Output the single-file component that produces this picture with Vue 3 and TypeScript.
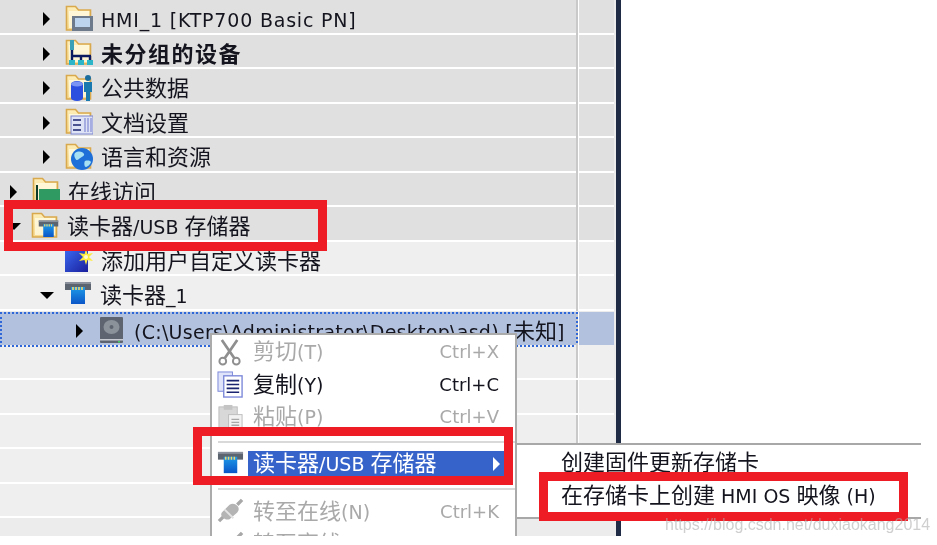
<script setup lang="ts">
interface Row { indent: number; arrow: '' | 'right' | 'down'; icon: string; text: string; tone: 'dark' | 'light' | 'sel'; track?: 'bold' | 'wide' | 'path' }
const rows: Row[] = [
  { indent: 43, arrow: 'right', icon: 'f-hmi', text: 'HMI_1 [KTP700 Basic PN]', tone: 'dark', track: 'wide' },
  { indent: 43, arrow: 'right', icon: 'f-net', text: '未分组的设备', tone: 'dark', track: 'bold' },
  { indent: 43, arrow: 'right', icon: 'f-data', text: '公共数据', tone: 'dark' },
  { indent: 43, arrow: 'right', icon: 'f-doc', text: '文档设置', tone: 'dark' },
  { indent: 43, arrow: 'right', icon: 'f-globe', text: '语言和资源', tone: 'dark' },
  { indent: 10, arrow: 'right', icon: 'f-online', text: '在线访问', tone: 'dark' },
  { indent: 10, arrow: 'down', icon: 'f-reader', text: '读卡器/USB 存储器', tone: 'dark' },
  { indent: 43, arrow: '', icon: 'add', text: '添加用户自定义读卡器', tone: 'light' },
  { indent: 43, arrow: 'down', icon: 'reader', text: '读卡器_1', tone: 'light' },
  { indent: 76, arrow: 'right', icon: 'disk', text: '(C:\\Users\\Administrator\\Desktop\\asd) [未知]', tone: 'sel', track: 'path' },
  { indent: 0, arrow: '', icon: '', text: '', tone: 'light' },
  { indent: 0, arrow: '', icon: '', text: '', tone: 'light' },
  { indent: 0, arrow: '', icon: '', text: '', tone: 'light' },
  { indent: 0, arrow: '', icon: '', text: '', tone: 'light' },
  { indent: 0, arrow: '', icon: '', text: '', tone: 'light' },
]
function segs(text: string): { t: string; cjk: boolean }[] {
  return (text.match(/[\u4e00-\u9fff]+|[^\u4e00-\u9fff]+/g) ?? []).map((t) => ({ t, cjk: /[\u4e00-\u9fff]/.test(t) }))
}
</script>

<template>
  <div class="screen">
    <svg class="defs" width="0" height="0">
      <defs>
        <linearGradient id="fold" x1="0" y1="0" x2="0" y2="1"><stop offset="0" stop-color="#fdeeb8"/><stop offset="1" stop-color="#f6d98e"/></linearGradient>
        <linearGradient id="card" x1="0" y1="0" x2="0" y2="1"><stop offset="0" stop-color="#1e9be8"/><stop offset="1" stop-color="#0a55c8"/></linearGradient>
        <linearGradient id="addg" x1="0" y1="0" x2="1" y2="1"><stop offset="0" stop-color="#3a68f0"/><stop offset="1" stop-color="#1a1f9c"/></linearGradient>
        <symbol id="folder" viewBox="0 0 28 28">
          <path d="M1.500 26V2.500h9l3 3.500h12v20z" fill="url(#fold)" stroke="#d9a94e" stroke-width="1.600"/>
          <path d="M4 24V7h20v17z" fill="#fffbe6" opacity=".75"/>
        </symbol>
        <symbol id="reader" viewBox="0 0 28 28">
          <rect x="1" y="2" width="26" height="8" fill="#5c6470"/>
          <rect x="1" y="2" width="26" height="2" fill="#8a919c"/>
          <path d="M7 7h14v17H7z" fill="url(#card)"/>
          <path d="M9 7v3M12 7v3M15 7v3M18 7v3" stroke="#f3d668" stroke-width="1.600"/>
        </symbol>
        <symbol id="add" viewBox="0 0 28 28">
          <rect x="0" y="5" width="23" height="22" fill="url(#addg)"/>
          <path d="M21 4l1.500 5 5.500-1-4 4 4 4-5.500-1-1.500 5-1.500-5-5.500 1 4-4-4-4 5.500 1z" fill="#ffec3c"/>
          <circle cx="21" cy="12" r="2" fill="#fffbd0"/>
        </symbol>
        <symbol id="disk" viewBox="0 0 28 28">
          <rect x="2" y="1" width="23" height="26" rx="1" fill="#5e6570"/>
          <ellipse cx="13.500" cy="11" rx="8" ry="7" fill="#8c929a"/>
          <circle cx="13.500" cy="11" r="2" fill="#5e6570"/>
          <rect x="2" y="23" width="23" height="1.500" fill="#c8ccd2"/>
          <rect x="20" y="25" width="2" height="1.500" fill="#3fd060"/>
        </symbol>
        <symbol id="f-hmi" viewBox="0 0 28 28">
          <use href="#folder" width="28" height="28"/>
          <rect x="7" y="12" width="21" height="15" fill="#6d7a8c"/>
          <rect x="10" y="14" width="15" height="9" fill="#bcd4ee"/>
        </symbol>
        <symbol id="f-net" viewBox="0 0 28 28">
          <use href="#folder" width="28" height="28"/>
          <rect x="5" y="2" width="4" height="10" fill="#3aa0b8"/>
          <path d="M7 12v6M7 18h19M7 18v4M16 18v4M25 18v4" stroke="#0c1a60" stroke-width="2.400" fill="none"/>
          <path d="M4 22h6v5H4zM13 22h6v5h-6zM22 22h6v5h-6z" fill="#2cb4c8"/>
        </symbol>
        <symbol id="f-data" viewBox="0 0 28 28">
          <use href="#folder" width="28" height="28"/>
          <path d="M6 11a6 3 0 0 1 12 0v14a6 3 0 0 1-12 0z" fill="#2c4fe0"/>
          <ellipse cx="12" cy="11" rx="6" ry="2.500" fill="#7b95f4"/>
          <circle cx="23" cy="5" r="3" fill="#1d6d9c"/>
          <path d="M19 9h8v10h-2v9h-4v-9h-2z" fill="#1a7ab0"/>
        </symbol>
        <symbol id="f-doc" viewBox="0 0 28 28">
          <use href="#folder" width="28" height="28"/>
          <rect x="6" y="9" width="22" height="18" fill="#dfe3f6" stroke="#7c86d0"/>
          <path d="M8 13h8M8 18h8M8 23h8" stroke="#1b2470" stroke-width="1.600"/>
          <path d="M20 11v14M23 11v14M26 11v14" stroke="#8d96d8" stroke-width="1.400"/>
        </symbol>
        <symbol id="f-globe" viewBox="0 0 28 28">
          <use href="#folder" width="28" height="28"/>
          <circle cx="17" cy="17" r="11" fill="#1f6fd8"/>
          <path d="M10 11c4-3 8-1 9 1s-3 3-5 5-3 1-4-1-1-4 0-5zM20 19c3-1 6 0 6 1s-3 5-5 5-2-5-1-6z" fill="#a6e0f2"/>
        </symbol>
        <symbol id="f-online" viewBox="0 0 28 28">
          <use href="#folder" width="28" height="28"/>
          <rect x="7" y="13" width="21" height="11" fill="#2f9a62"/>
          <path d="M10 24v3M14 24v3M18 24v3M22 24v3" stroke="#c9a23a" stroke-width="2"/>
          <path d="M5 9v18" stroke="#0e3a2a" stroke-width="2"/>
        </symbol>
        <symbol id="f-reader" viewBox="0 0 28 28">
          <use href="#folder" width="28" height="28"/>
          <use href="#reader" x="7" y="8" width="21" height="21"/>
        </symbol>
        <symbol id="scissors" viewBox="0 0 28 28">
          <path d="M5 1l13 19M21 1L8 20" stroke="#8f8f8f" stroke-width="2.800" fill="none"/>
          <circle cx="6" cy="23" r="3.500" fill="none" stroke="#8f8f8f" stroke-width="2"/>
          <circle cx="20" cy="23" r="3.500" fill="none" stroke="#8f8f8f" stroke-width="2"/>
        </symbol>
        <symbol id="copy" viewBox="0 0 28 28">
          <rect x="1" y="1" width="15" height="20" fill="#dfe4fa" stroke="#7a86d8"/>
          <rect x="7" y="5" width="19" height="22" fill="#fff" stroke="#7a86d8" stroke-width="1.400"/>
          <path d="M10 10h13M10 14h13M10 18h13M10 22h13" stroke="#1b2470" stroke-width="1.700"/>
        </symbol>
        <symbol id="paste" viewBox="0 0 28 28">
          <rect x="2" y="3" width="19" height="23" fill="#d8d8d8" stroke="#bdbdbd"/>
          <rect x="7" y="1" width="9" height="5" fill="#c4c4c4"/>
          <rect x="12" y="11" width="14" height="16" fill="#f2f2f2" stroke="#bdbdbd"/>
          <path d="M15 16h8M15 19h8M15 22h8" stroke="#a8a8a8" stroke-width="1.400"/>
        </symbol>
        <symbol id="plug" viewBox="0 0 28 28">
          <path d="M2 24l5-5M21 7l5-5" stroke="#a8a8a8" stroke-width="3.500"/>
          <path d="M5 15l8-8c3-2 6-1 8 1s2 5 0 7l-8 7c-3 1-5 0-7-2s-2-3-1-5z" fill="#b4b4b4"/>
          <path d="M8 12l9 9" stroke="#e4e4e4" stroke-width="2"/>
        </symbol>
      </defs>
    </svg>

    <div class="workspace">
      <div class="tree">
        <div v-for="(r, i) in rows" :key="i" class="row" :class="r.tone">
          <div class="name" :style="{ paddingLeft: r.indent + 'px' }">
            <span class="tw" :class="r.arrow"></span>
            <svg v-if="r.icon" class="ic" width="28" height="28"><use :href="'#' + r.icon"/></svg>
            <span class="label" :class="r.track"><span v-for="(s, j) in segs(r.text)" :key="j" :class="{ cjk: s.cjk }">{{ s.t }}</span></span>
          </div>
          <div class="cell"></div>
        </div>
      </div>
      <div class="bar"></div>
    </div>

    <div class="menu">
      <div class="mi off"><svg class="mic" width="27" height="27"><use href="#scissors"/></svg><span class="ml"><span class="cjk">剪切</span>(T)</span><span class="sc">Ctrl+X</span></div>
      <div class="mi"><svg class="mic" width="27" height="27"><use href="#copy"/></svg><span class="ml"><span class="cjk">复制</span>(Y)</span><span class="sc">Ctrl+C</span></div>
      <div class="mi off"><svg class="mic" width="27" height="27"><use href="#paste"/></svg><span class="ml"><span class="cjk">粘贴</span>(P)</span><span class="sc">Ctrl+V</span></div>
      <div class="sep"></div>
      <div class="mi hi"><svg class="mic" width="27" height="27"><use href="#reader"/></svg><span class="ml"><span class="cjk">读卡器</span>/USB <span class="cjk">存储器</span></span><span class="sub"></span></div>
      <div class="sep low"></div>
      <div class="mi off"><svg class="mic" width="27" height="27"><use href="#plug"/></svg><span class="ml"><span class="cjk">转至在线</span>(N)</span><span class="sc">Ctrl+K</span></div>
      <div class="mi off"><svg class="mic" width="27" height="27"><use href="#plug"/></svg><span class="ml"><span class="cjk">转至离线</span>(F)</span><span class="sc">Ctrl+M</span></div>
    </div>

    <div class="submenu">
      <div class="si first"><span class="cjk">创建固件更新存储卡</span></div>
      <div class="si"><span class="cjk">在存储卡上创建</span> HMI OS <span class="cjk">映像</span> (H)</div>
    </div>

    <div class="mark m1"></div>
    <div class="mark m2"></div>
    <div class="mark m3"></div>
    <div class="wm">https://blog.csdn.net/duxiaokang2014</div>
  </div>
</template>

<style scoped>
.screen {
  position: relative;
  width: 937px;
  height: 536px;
  overflow: hidden;
  background: #fff;
  font-family: "DejaVu Sans", "Noto Sans CJK SC", sans-serif;
  font-size: 18px;
  color: #14141e;
  filter: blur(0.45px);
}
.defs { position: absolute; }
.workspace { display: flex; height: 536px; }
.tree { width: 616px; padding-right: 2px; background: #ececec; box-sizing: border-box; }
.bar { width: 5px; background: #1f2a44; }
.row {
  display: grid;
  grid-template-columns: 578px 1fr;
  height: 34.55px;
  box-sizing: border-box;
  border-bottom: 2px solid #fff;
}
.row.dark { background: #e0e0e0; }
.row.light { background: #efefef; }
.row.sel { background: #b1c1de; height: 33px; margin-top: 1.500px; border-bottom: 0; }
.row.sel .name { outline: 2px dotted #2f66d8; outline-offset: -2px; }
.name { display: flex; align-items: center; min-width: 0; border-right: 2px solid #c9c9c9; white-space: nowrap; }
.cell { border-left: 1px solid #fff; }
.tw { width: 12px; margin-right: 10px; flex: none; display: block; height: 0; }
.tw.right { width: 0; height: 0; margin-top: 3px; margin-right: 15px; border-left: 7px solid #000; border-top: 7px solid transparent; border-bottom: 7px solid transparent; }
.tw.down { width: 0; height: 0; margin-top: 3px; margin-left: -3px; margin-right: 10px; border-top: 7px solid #000; border-left: 7.500px solid transparent; border-right: 7.500px solid transparent; }
.ic { flex: none; margin-right: 8px; }
.label { font-size: 19px; line-height: 30px; margin-top: 5px; }
.wide { letter-spacing: 0.8px; }
.path { letter-spacing: 0.28px; }
.cjk { font-size: 22px; }
.wide .cjk, .path .cjk { letter-spacing: 0; }
.bold { font-weight: 700; letter-spacing: 1.500px; }
.menu {
  position: absolute;
  left: 210px;
  top: 333px;
  width: 307px;
  height: 260px;
  box-sizing: border-box;
  background: #fff;
  border: 2px solid #ababab;
}
.mi { display: flex; align-items: center; height: 32.5px; padding-left: 5px; padding-right: 16px; font-size: 19px; }
.mic { flex: none; margin-top: 2px; margin-right: 9px; }
.ml { flex: 1; white-space: nowrap; line-height: 30px; margin-top: 2px; }
.sc { font-size: 18px; margin-top: 1px; }
.off { color: #a9a9a9; }
.sep { height: 2px; margin: 8px 0 8px 6px; background: #d9d9d9; }
.sep.low { margin: 11px 0 5px 6px; }
.mi.hi { height: 26px; color: #fff; padding-right: 8px; }
.mi.hi .ml { background: #3563c9; height: 26px; line-height: 26px; padding-left: 5px; margin-left: -5px; margin-top: 0; }
.mi.hi .mic { height: 27px; margin-top: 0; }
.sub {
  position: absolute; right: 15px;
  border-left: 7px solid #fff; border-top: 7px solid transparent; border-bottom: 7px solid transparent;
}
.submenu {
  position: absolute;
  left: 517px;
  top: 443px;
  width: 404px;
  height: 76px;
  box-sizing: border-box;
  padding-left: 44px;
  background: #fff;
  border-top: 2px solid #a8a8a8;
  border-bottom: 2px solid #a8a8a8;
  font-size: 19px;
}
.si { height: 35px; line-height: 34px; white-space: nowrap; }
.si.first { line-height: 36px; height: 34px; }
.mark { position: absolute; box-sizing: border-box; border: 9px solid #ee1c25; }
.m1 { left: 4px; top: 200px; width: 323px; height: 51px; }
.m2 { left: 193px; top: 427px; width: 320px; height: 58px; }
.m3 { left: 539px; top: 472px; width: 369px; height: 49px; }
.wm {
  position: absolute;
  left: 665px;
  top: 516px;
  font-family: "Liberation Sans", sans-serif;
  font-size: 16px;
  color: rgba(175, 175, 175, 0.6);
  white-space: nowrap;
}
</style>
